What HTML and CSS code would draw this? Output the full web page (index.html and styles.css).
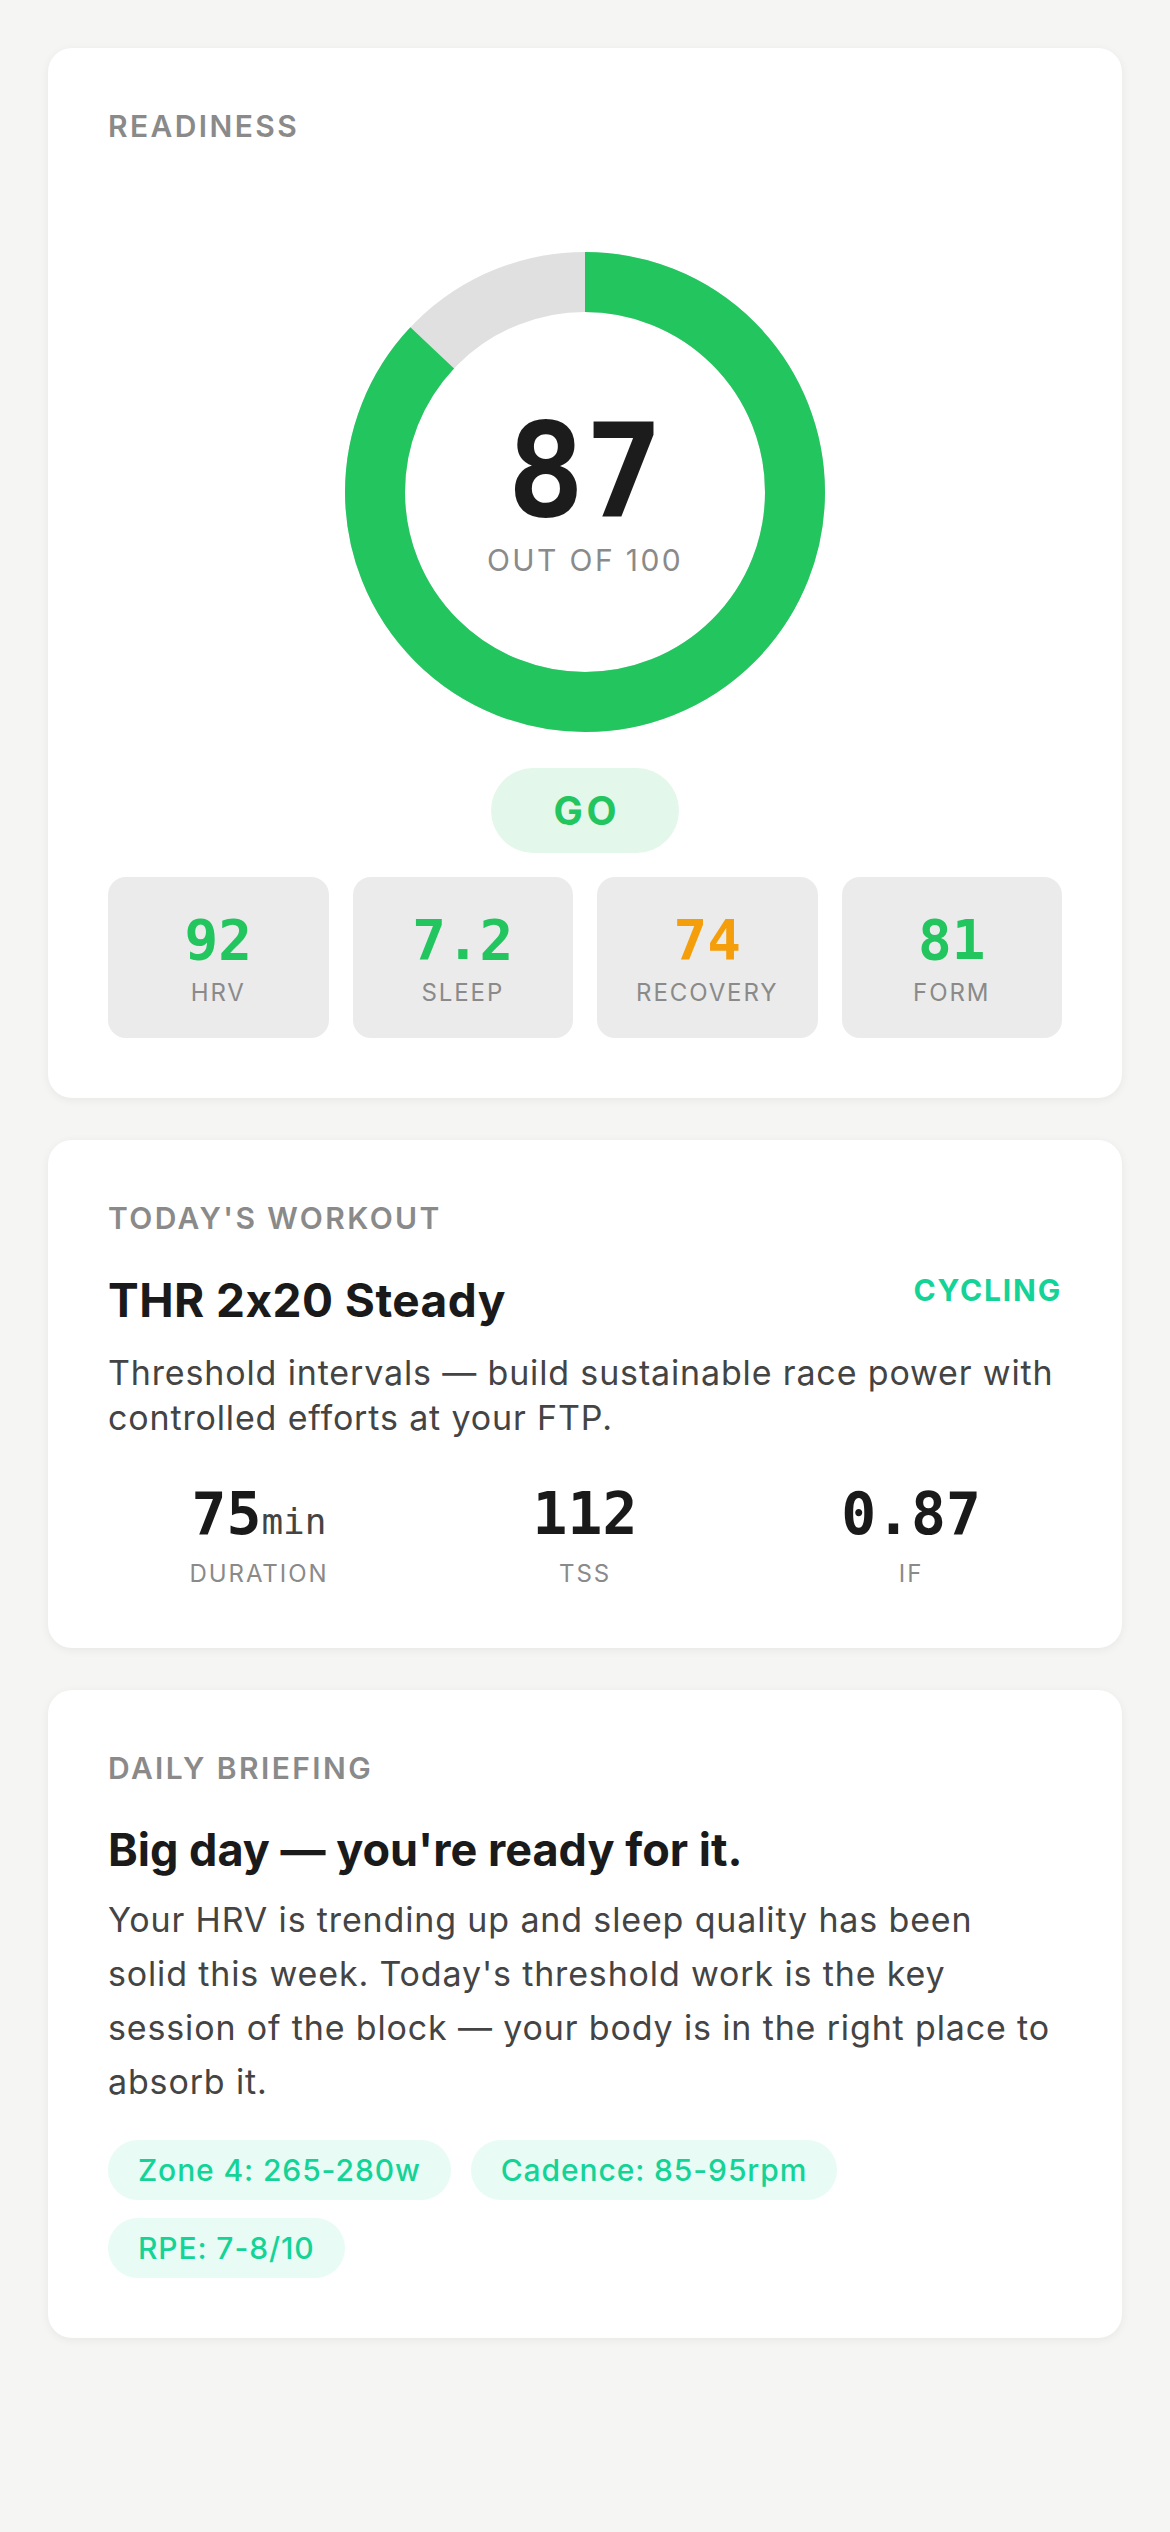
FILE: index.html
```html
<!DOCTYPE html>
<html lang="en">
  <head>
    <meta charset="UTF-8" />
    <meta name="viewport" content="width=device-width, initial-scale=1.0" />
    <title>Readiness</title>
    <link rel="stylesheet" href="styles.css">
  </head>
  <body>
    <div class="page">
      <section class="card">
        <div class="card-label">Readiness</div>

        <div class="gauge">
          <svg class="gauge-ring" viewBox="0 0 480 480" width="480" height="480">
            <circle cx="240" cy="240" r="210" fill="none" stroke="#e0e0e0" stroke-width="60" />
            <circle
              cx="240"
              cy="240"
              r="210"
              fill="none"
              stroke="#22c55e"
              stroke-width="60"
              stroke-dasharray="1147.9 1319.5"
              transform="rotate(-90 240 240)"
            />
          </svg>
          <div class="gauge-center">
            <div class="gauge-score">87</div>
            <div class="gauge-sub">Out of 100</div>
          </div>
        </div>

        <div class="status-row">
          <span class="status-pill">GO</span>
        </div>

        <div class="tiles">
          <div class="tile">
            <div class="tile-value good">92</div>
            <div class="tile-label">HRV</div>
          </div>
          <div class="tile">
            <div class="tile-value good">7.2</div>
            <div class="tile-label">Sleep</div>
          </div>
          <div class="tile">
            <div class="tile-value warn">74</div>
            <div class="tile-label">Recovery</div>
          </div>
          <div class="tile">
            <div class="tile-value good">81</div>
            <div class="tile-label">Form</div>
          </div>
        </div>
      </section>

      <section class="card">
        <div class="card-label">Today's Workout</div>

        <div class="workout-head">
          <h2 class="workout-title">THR 2x20 Steady</h2>
          <span class="workout-sport">Cycling</span>
        </div>

        <p class="workout-desc">
          Threshold intervals — build sustainable race power with controlled efforts at your FTP.
        </p>

        <div class="workout-stats">
          <div class="stat">
            <div class="stat-value">75<span class="stat-unit">min</span></div>
            <div class="stat-label">Duration</div>
          </div>
          <div class="stat">
            <div class="stat-value">112</div>
            <div class="stat-label">TSS</div>
          </div>
          <div class="stat">
            <div class="stat-value">0.87</div>
            <div class="stat-label">IF</div>
          </div>
        </div>
      </section>

      <section class="card">
        <div class="card-label">Daily Briefing</div>

        <h2 class="brief-title">Big day — you're ready for it.</h2>
        <p class="brief-text">
          Your HRV is trending up and sleep quality has been solid this week. Today's threshold work
          is the key session of the block — your body is in the right place to absorb it.
        </p>

        <div class="chips">
          <span class="chip">Zone 4: 265-280w</span>
          <span class="chip">Cadence: 85-95rpm</span>
          <span class="chip">RPE: 7-8/10</span>
        </div>
      </section>
    </div>
  </body>
</html>
```

FILE: styles.css
```css
body {
  margin: 0;
  background-color: #f5f5f4;
  font-family: Inter, "Noto Sans", sans-serif;
  font-feature-settings: "calt" 0;
  color: #1a1a1a;
}

.page {
  padding: 48px;
  display: flex;
  flex-direction: column;
  gap: 42px;
  min-height: 2532px;
  box-sizing: border-box;
}

.card {
  background-color: #fff;
  border-radius: 24px;
  padding: 60px;
  box-shadow: 0 2px 10px rgba(0, 0, 0, 0.06);
}

.card-label {
  font-size: 30px;
  font-weight: 600;
  letter-spacing: 0.08em;
  text-transform: uppercase;
  color: #8a8a8a;
  margin-bottom: 36px;
}

/* readiness gauge */
.gauge {
  position: relative;
  width: 480px;
  height: 480px;
  margin: 108px auto 36px;
}

.gauge-ring {
  display: block;
}

.gauge-center {
  position: absolute;
  inset: 0;
  display: flex;
  flex-direction: column;
  align-items: center;
  justify-content: center;
}

.gauge-score {
  font-family: "DejaVu Sans Mono", monospace;
  font-weight: 700;
  font-size: 130px;
  line-height: 1;
  color: #1c1c1c;
}

.gauge-sub {
  margin-top: 6px;
  font-size: 30px;
  letter-spacing: 0.08em;
  text-transform: uppercase;
  color: #8a8a8a;
}

.status-row {
  display: flex;
  justify-content: center;
  margin-bottom: 24px;
}

.status-pill {
  padding: 19px 58px 19px 62px;
  border-radius: 999px;
  background-color: #e3f7ea;
  color: #22c55e;
  font-size: 39px;
  font-weight: 700;
  letter-spacing: 0.1em;
}

.tiles {
  display: grid;
  grid-template-columns: repeat(4, 1fr);
  gap: 24px;
}

.tile {
  background-color: #ebebeb;
  border-radius: 18px;
  padding: 30px 0 31px;
  text-align: center;
}

.tile-value {
  font-family: "DejaVu Sans Mono", monospace;
  font-weight: 700;
  font-size: 56px;
}

.tile-value.good {
  color: #22c55e;
}

.tile-value.warn {
  color: #f59e0b;
}

.tile-label {
  margin-top: 6px;
  font-size: 24px;
  letter-spacing: 0.08em;
  text-transform: uppercase;
  color: #8a8a8a;
}

/* workout */
.workout-head {
  display: flex;
  justify-content: space-between;
  align-items: flex-start;
}

.workout-title {
  margin: 0;
  font-size: 46px;
  font-weight: 700;
  letter-spacing: 0.01em;
}

.workout-sport {
  font-size: 30px;
  font-weight: 700;
  letter-spacing: 0.06em;
  text-transform: uppercase;
  color: #14d396;
}

.workout-desc {
  margin: 22px 0 0;
  font-size: 34px;
  line-height: 45px;
  letter-spacing: 0.025em;
  color: #444;
}

.workout-stats {
  display: grid;
  grid-template-columns: repeat(3, 1fr);
  gap: 24px;
  margin-top: 40px;
  text-align: center;
}

.stat-value {
  font-family: "DejaVu Sans Mono", monospace;
  font-weight: 700;
  font-size: 58px;
  color: #1a1a1a;
}

.stat-unit {
  font-size: 36px;
  font-weight: 400;
  color: #444;
}

.stat-label {
  margin-top: 11px;
  font-size: 24px;
  letter-spacing: 0.08em;
  text-transform: uppercase;
  color: #8a8a8a;
}

/* briefing */
.brief-title {
  margin: 0;
  font-size: 45px;
  font-weight: 700;
}

.brief-text {
  margin: 16px 0 0;
  font-size: 34px;
  line-height: 54px;
  letter-spacing: 0.025em;
  color: #444;
}

.chips {
  display: flex;
  flex-wrap: wrap;
  gap: 18px 20px;
  margin-top: 31px;
}

.chip {
  padding: 12px 30px;
  border-radius: 999px;
  background-color: #e8fbf5;
  color: #14d396;
  font-size: 30px;
  font-weight: 500;
  letter-spacing: 0.03em;
}
```
